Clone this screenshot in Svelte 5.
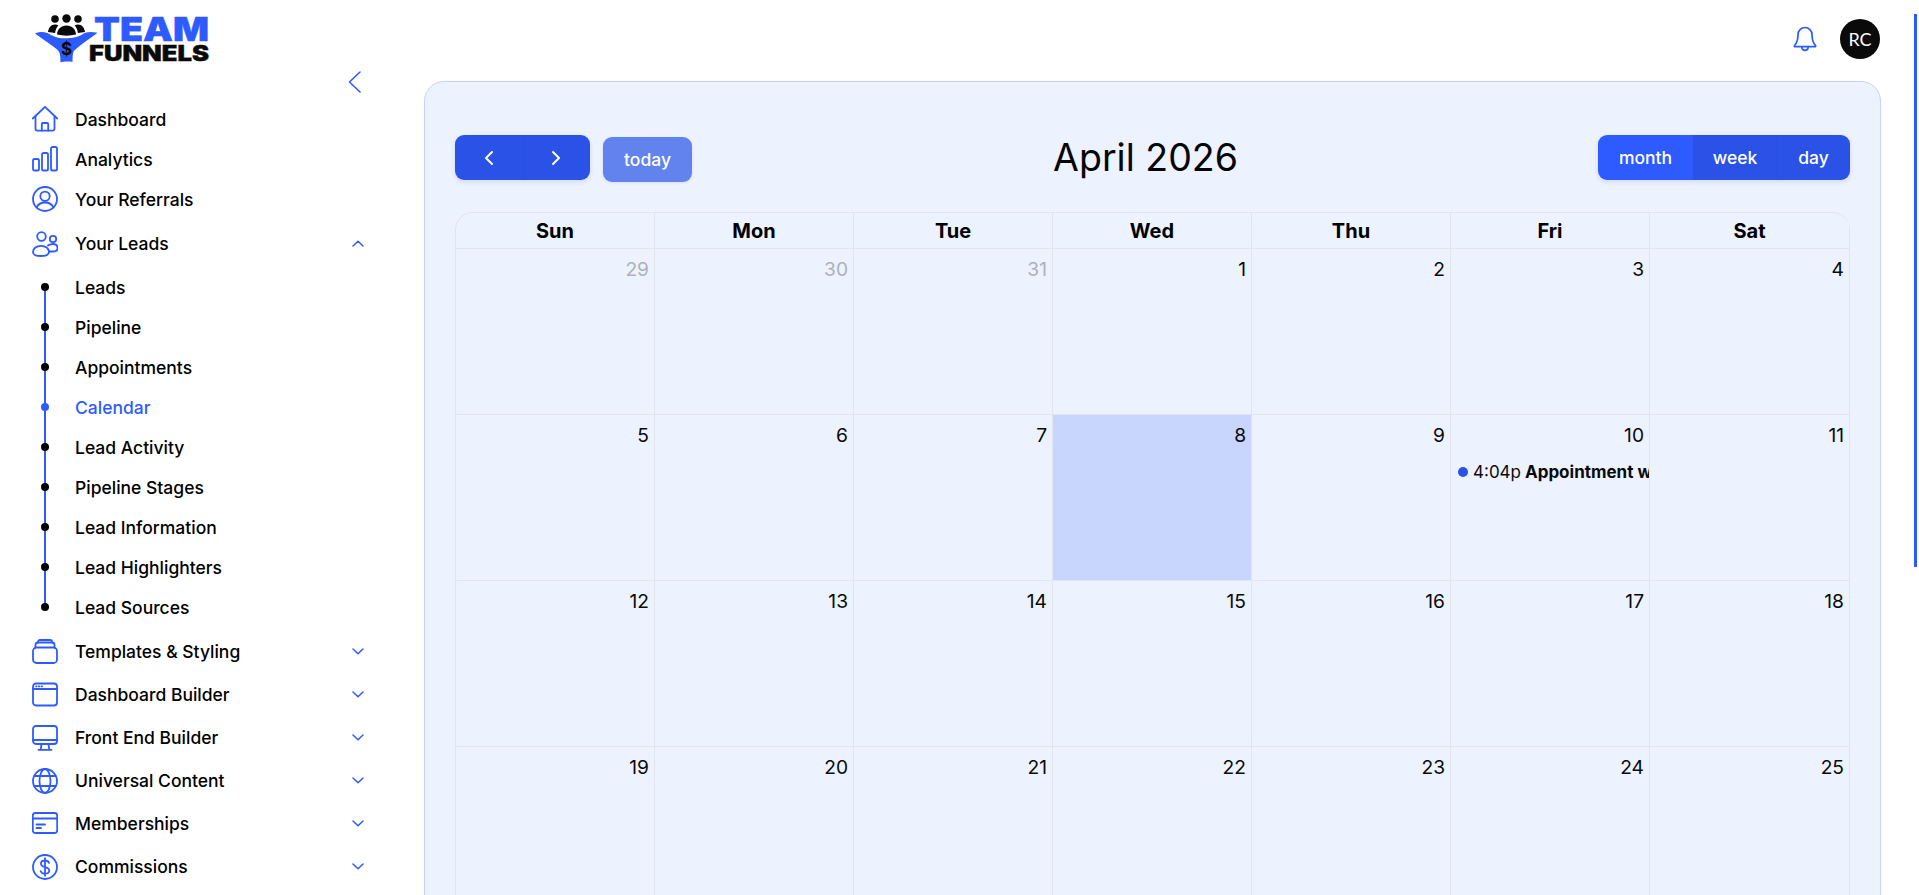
<script>
  const top = [
    { label: 'Dashboard', icon: 'home' },
    { label: 'Analytics', icon: 'bars' },
    { label: 'Your Referrals', icon: 'user' }
  ];
  const subs = ['Leads', 'Pipeline', 'Appointments', 'Calendar', 'Lead Activity', 'Pipeline Stages', 'Lead Information', 'Lead Highlighters', 'Lead Sources'];
  const groups = [
    { label: 'Templates & Styling', icon: 'stack' },
    { label: 'Dashboard Builder', icon: 'window' },
    { label: 'Front End Builder', icon: 'monitor' },
    { label: 'Universal Content', icon: 'globe' },
    { label: 'Memberships', icon: 'card' },
    { label: 'Commissions', icon: 'dollar' }
  ];
  const days = ['Sun', 'Mon', 'Tue', 'Wed', 'Thu', 'Fri', 'Sat'];
  const weeks = [
    [29, 30, 31, 1, 2, 3, 4],
    [5, 6, 7, 8, 9, 10, 11],
    [12, 13, 14, 15, 16, 17, 18],
    [19, 20, 21, 22, 23, 24, 25]
  ];
</script>

{#snippet icon(name)}
  <svg class="icon" viewBox="0 0 26 26" fill="none" stroke="currentColor" stroke-width="1.8" stroke-linecap="round" stroke-linejoin="round">
    {#if name === 'home'}
      <path d="M0.8 12.5 13 0.8l12.2 11.7" />
      <path d="M3.5 10.5v12.3a1.8 1.8 0 0 0 1.8 1.8h15.4a1.8 1.8 0 0 0 1.8-1.8V10.5" />
      <path d="M9.8 24.5v-6.500a1 1 0 0 1 1-1h4.400a1 1 0 0 1 1 1v6.500" />
    {:else if name === 'bars'}
      <rect x="1" y="13" width="6" height="11.5" rx="1.6" />
      <rect x="10" y="7" width="6" height="17.5" rx="1.6" />
      <rect x="19" y="1" width="6" height="23.5" rx="1.6" />
    {:else if name === 'user'}
      <circle cx="13" cy="13" r="12" />
      <circle cx="13" cy="10.3" r="4.7" />
      <path d="M4.5 21.5c1.6-3.2 4.8-5 8.5-5s6.9 1.8 8.5 5" />
    {:else if name === 'people'}
      <circle cx="9.5" cy="5.5" r="4.3" />
      <circle cx="21" cy="8" r="3.2" />
      <path d="M1 21c0-3.6 3.6-6.2 8-6.200s8 2.600 8 6.200-3.600 4-8 4-8-.4-8-4Z" />
      <path d="M16 14.600c1.400-1 3-1.600 5-1.600 2.800 0 4.500 1.800 4.500 4.200 0 2.400-2 3.300-4.500 3.300h-4" />
    {:else if name === 'stack'}
      <rect x="1" y="8.500" width="24" height="15.500" rx="3.500" />
      <path d="M3.500 8.500V6a2.500 2.500 0 0 1 2.500-2.500h14a2.500 2.500 0 0 1 2.500 2.500v2.500" />
      <path d="M6 3.500V2.800A1.800 1.800 0 0 1 7.800 1h10.400A1.800 1.800 0 0 1 20 2.800v.7" />
    {:else if name === 'window'}
      <rect x="1" y="1.500" width="24" height="22" rx="3" />
      <path d="M1 7h24" />
      <path d="M4 4.300h.6M6.800 4.300h.6M9.600 4.300h.6" />
    {:else if name === 'monitor'}
      <rect x="1" y="1" width="24" height="18" rx="3" />
      <path d="M1 15h24" />
      <path d="M9.500 19.500 8.700 24.500M16.500 19.500l.8 5M6.500 24.800h13" />
    {:else if name === 'globe'}
      <circle cx="13" cy="13" r="12" />
      <ellipse cx="13" cy="13" rx="5.500" ry="12" />
      <path d="M2.500 8h21M2.500 18h21" />
    {:else if name === 'card'}
      <rect x="0.800" y="2" width="24.400" height="20" rx="2.500" />
      <path d="M0.800 7.500h24.400" stroke-width="2" />
      <path d="M4.500 13.500h8.500M4.500 17h4.500" />
    {:else if name === 'dollar'}
      <circle cx="13" cy="13" r="12" />
      <path d="M17 8.800c-.6-1.500-2.100-2.300-4-2.300-2.300 0-4 1.200-4 3.200 0 4.600 8.300 2.200 8.300 6.800 0 2-1.800 3.200-4.300 3.200-2.100 0-3.700-.9-4.300-2.500M13 4.200v17.600" stroke-width="1.800" />
    {/if}
  </svg>
{/snippet}

{#snippet chevron(up)}
  <svg class="chev" viewBox="0 0 12 7" fill="none" stroke="currentColor" stroke-width="1.500" stroke-linecap="round" stroke-linejoin="round">
    <path d={up ? 'M1 6l5-4.800L11 6' : 'M1 1l5 4.800L11 1'} />
  </svg>
{/snippet}

<div class="page">
  <aside class="side">
    <svg class="logo" viewBox="0 0 190 60" aria-label="Team Funnels">
      <path d="M1 28.500C8 26 12 27 16.500 29.800c5 3 10 3.500 15 3.500s12-.5 17-4c3.500-2.500 8-3 15-1.500C58 32 50 37.500 42 44c-2.500 2-3.500 3-3.500 13-2.500-.8-9-.8-12 .5 0-9-1-11-4-13.500C16 39 7 33 1 28.500Z" fill="#2e5bff" />
      <g fill="#0a0a0a">
        <circle cx="21" cy="14" r="3.800" /><circle cx="32.500" cy="13.500" r="4.200" /><circle cx="44" cy="14" r="3.800" />
        <path d="M14 27c.5-4 3-7.500 7-7.500 1.400 0 2.400.4 3.300 1-1.700 1.700-2.800 4.200-3.200 7.500L14 27Z" />
        <path d="M51 27c-.5-4-3-7.500-7-7.500-1.400 0-2.400.4-3.300 1 1.700 1.700 2.800 4.200 3.200 7.500L51 27Z" />
        <path d="M23 29.500c.5-5.500 4-9 9.500-9s9 3.500 9.500 9c-6 1.500-13 1.500-19 0Z" />
      </g>
      <text class="dollar" x="32.500" y="50" text-anchor="middle">$</text>
      <text class="lg-team" x="60" y="36" textLength="115" lengthAdjust="spacingAndGlyphs">TEAM</text>
      <text class="lg-fun" x="55" y="56" textLength="120" lengthAdjust="spacingAndGlyphs">FUNNELS</text>
    </svg>
    <div class="collapse">
      <svg viewBox="0 0 13 22" fill="none" stroke="currentColor" stroke-width="1.600" stroke-linecap="round" stroke-linejoin="round"><path d="M12 1 1.500 11 12 21" /></svg>
    </div>
    <nav>
      {#each top as item}
        <div class="row">{@render icon(item.icon)}<span>{item.label}</span></div>
      {/each}
      <div class="row group leadsrow">{@render icon('people')}<span>Your Leads</span>{@render chevron(true)}</div>
      <div class="subs">
        {#each subs as s}
          <div class="sub" class:active={s === 'Calendar'}><i></i><span>{s}</span></div>
        {/each}
      </div>
      {#each groups as item}
        <div class="row group">{@render icon(item.icon)}<span>{item.label}</span>{@render chevron(false)}</div>
      {/each}
      <div class="row group">{@render icon('user')}</div>
    </nav>
  </aside>

  <main>
    <header>
      <svg class="bell" viewBox="0 0 24 26" fill="none" stroke="currentColor" stroke-width="1.700" stroke-linecap="round" stroke-linejoin="round">
        <path d="M5 8.500a7 7 0 0 1 14 0c0 5 .6 8 3.500 11 .4.500.1 1.200-.6 1.200H2.100c-.7 0-1-.7-.6-1.200C4.400 16.500 5 13.500 5 8.500Z" />
        <path d="M8.800 21c0 2 1.400 3.300 3.200 3.300s3.200-1.300 3.200-3.300" />
      </svg>
      <div class="avatar">RC</div>
    </header>
    <section class="panel">
      <div class="toolbar">
        <div class="left">
          <div class="btns nav">
            <button aria-label="Previous"><svg viewBox="0 0 10 16" fill="none" stroke="#fff" stroke-width="2" stroke-linecap="round" stroke-linejoin="round"><path d="M8 2 2 8l6 6" /></svg></button>
            <button aria-label="Next"><svg viewBox="0 0 10 16" fill="none" stroke="#fff" stroke-width="2" stroke-linecap="round" stroke-linejoin="round"><path d="m2 2 6 6-6 6" /></svg></button>
          </div>
          <button class="today">today</button>
        </div>
        <h1>April 2026</h1>
        <div class="btns views">
          <button class="on month">month</button>
          <button class="week">week</button>
          <button class="day">day</button>
        </div>
      </div>
      <div class="cal">
        <div class="head">
          {#each days as d}<div class="hcell">{d}</div>{/each}
        </div>
        {#each weeks as w, wi}
          <div class="week-row">
            {#each w as n, i}
              <div class="cell" class:other={wi === 0 && i < 3} class:today-cell={wi === 1 && i === 3}>
                <div class="num">{n}</div>
                {#if wi === 1 && i === 5}
                  <div class="event"><i></i><span>4:04p</span><b>Appointment with Lead</b></div>
                {/if}
              </div>
            {/each}
          </div>
        {/each}
      </div>
    </section>
  </main>
  <div class="thumb"></div>
</div>

<style>
  :global(body) { margin: 0; overflow: hidden; background: #fff; }
  .page {
    position: relative;
    display: flex;
    width: 1919px;
    height: 895px;
    overflow: hidden;
    font-family: Inter, "Liberation Sans", sans-serif;
    color: #000;
  }
  .side { width: 424px; flex: none; display: flex; flex-direction: column; }
  .logo { display: block; width: 190px; height: 60px; margin: 5px 0 0 34px; flex: none; }
  .lg-team { font: 900 33px Inter, sans-serif; fill: #2e5bff; stroke: #2e5bff; stroke-width: .4px; }
  .lg-fun { font: 900 21px Inter, sans-serif; fill: #0a0a0a; stroke: #0a0a0a; stroke-width: .4px; }
  .dollar { font: 700 17px Inter, sans-serif; fill: #0a0a0a; }
  .collapse { height: 34px; display: flex; justify-content: flex-end; align-items: flex-start; padding-right: 63px; color: #2e5bff; flex: none; }
  .collapse svg { width: 13px; height: 22px; margin-top: 6px; }
  nav { display: flex; flex-direction: column; }
  .row { height: 40px; display: flex; align-items: center; padding-left: 32px; font-size: 17.500px; font-weight: 500; flex: none; }
  .row span { margin-left: 17px; flex: 1; }
  .group { height: 43px; padding-right: 60px; }
  .leadsrow { margin-top: 3px; }
  .icon { width: 26px; height: 26px; color: #2e5bff; flex: none; }
  .chev { width: 12px; height: 7px; color: #2e5bff; flex: none; }
  .subs { position: relative; padding: 2px 0 3px; }
  .subs::before { content: ""; position: absolute; left: 44px; top: 22px; bottom: 23px; width: 2px; background: #2e5bff; }
  .sub { height: 40px; display: flex; align-items: center; font-size: 17.500px; font-weight: 500; padding-left: 41px; position: relative; }
  .sub i { width: 8px; height: 8px; border-radius: 50%; background: #000; flex: none; }
  .sub span { margin-left: 26px; }
  .sub.active { color: #2e5bff; }
  .sub.active i { background: #2e5bff; }
  main { flex: 1; min-width: 0; display: flex; flex-direction: column; }
  header { height: 81px; flex: none; display: flex; justify-content: flex-end; align-items: flex-start; padding: 19px 39px 0 0; box-sizing: border-box; gap: 23px; }
  .bell { width: 24px; height: 26px; margin-top: 7px; color: #2e5bff; }
  .avatar { width: 40px; height: 40px; border-radius: 50%; background: #0a0a0a; color: #fff; display: flex; align-items: center; justify-content: center; font: 400 18px Lato, sans-serif; }
  .panel { margin-right: 38px; height: 900px; flex: none; box-sizing: border-box; background: #ecf2fe; border: 1px solid #c7d2fb; border-radius: 20px; padding: 53px 30px 0; }
  .toolbar { display: grid; grid-template-columns: 1fr auto 1fr; align-items: flex-start; height: 77px; }
  .left { display: flex; gap: 13px; align-items: flex-start; }
  .btns { display: flex; border-radius: 9px; overflow: hidden; box-shadow: 0 2px 5px rgba(30, 50, 120, .12); height: 45px; }
  button { border: 0; padding: 0; color: #fff; font: 500 17.500px Inter, sans-serif; background: #2b52e6; display: flex; align-items: center; justify-content: center; }
  .nav button { width: 67.500px; }
  .nav button + button, .views .day { box-shadow: inset 1px 0 0 rgba(0, 0, 60, .04); }
  .nav button svg { width: 10px; height: 16px; }
  .today { width: 89px; height: 45px; margin-top: 2px; border-radius: 9px; background: #6283ee; box-shadow: 0 1px 3px rgba(30, 50, 120, .1); }
  h1 { margin: 0 14px 0 0; font-size: 37.500px; font-weight: 400; line-height: 45px; text-align: center; color: #050505; }
  .views { justify-self: end; }
  .views .month { width: 95px; background: #2e5bff; }
  .views .week { width: 84px; }
  .views .day { width: 73px; }
  .cal { border: 1px solid #e1e5ee; border-right: 0; border-bottom: 0; border-radius: 18px 18px 0 0; overflow: hidden; }
  .head, .week-row { display: grid; grid-template-columns: repeat(6, 199px) 1fr; }
  .hcell { height: 35px; display: flex; align-items: center; justify-content: center; font-weight: 700; font-size: 20px; border-right: 1px solid #e1e5ee; border-bottom: 1px solid #e1e5ee; }
  .cell { height: 165px; border-right: 1px solid #e1e5ee; border-bottom: 1px solid #e1e5ee; overflow: hidden; min-width: 0; }
  .num { text-align: right; font-size: 19.200px; line-height: 22px; padding: 9px 5px 0 0; color: #0a0a0a; }
  .other .num { color: #aeb1b9; }
  .today-cell { background: #c8d5fc; }
  .event { display: flex; align-items: center; margin: 15px 0 0 7px; font-size: 17px; white-space: nowrap; overflow: hidden; color: #0a0a0a; line-height: 22px; }
  .event i { width: 10px; height: 10px; border-radius: 50%; background: #2b52e6; flex: none; margin-right: 5px; }
  .event b { margin-left: 4px; font-weight: 700; }
  .thumb { position: absolute; right: 2px; top: 14px; width: 3px; height: 553px; background: #2e5bff; }
</style>
